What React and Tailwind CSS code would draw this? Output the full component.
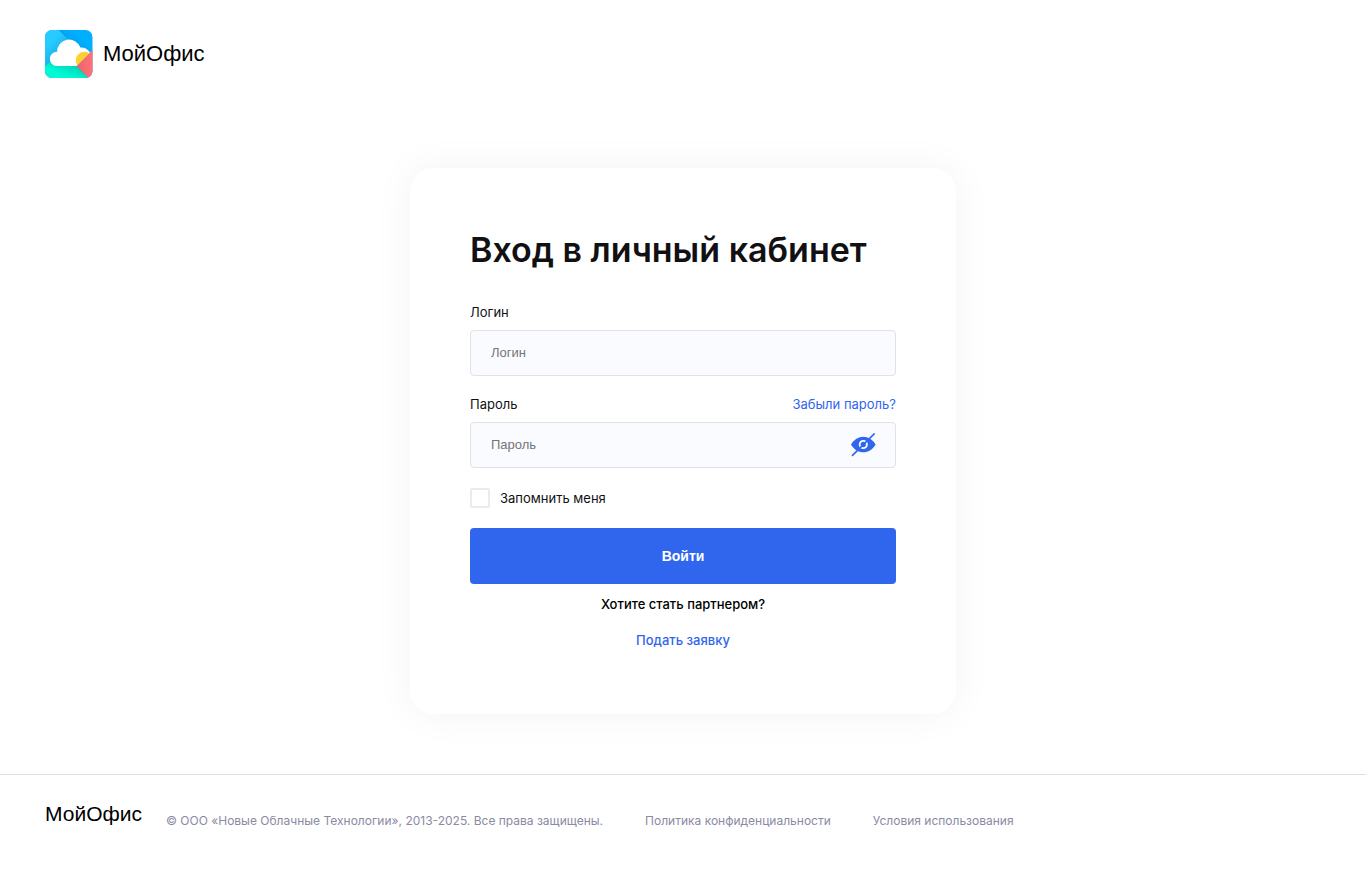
import React, { useState } from 'react';

const LogoIcon = () => (
  <svg className="w-12 h-12" viewBox="0 0 48 48" aria-hidden="true">
    <defs>
      <clipPath id="logoShape">
        <rect width="47.5" height="48" rx="7" />
      </clipPath>
      <clipPath id="cloudShape">
        <path d="M11.600 36A7.100 7.100 0 0 1 12.100 21.800 12 12 0 0 1 35.400 17.500C39.500 17.300 43 19.300 45 22.400L31.500 36z" />
      </clipPath>
      <linearGradient id="logoLeft" x1="0" y1="0" x2="1" y2="1">
        <stop offset="0.25" stopColor="#26ccff" />
        <stop offset="0.8" stopColor="#0f94d4" />
      </linearGradient>
      <linearGradient id="logoTop" x1="1" y1="0" x2="0" y2="1">
        <stop offset="0.2" stopColor="#00b0ff" />
        <stop offset="0.8" stopColor="#007fd0" />
      </linearGradient>
      <linearGradient id="logoBottom" x1="0" y1="1" x2="1" y2="0">
        <stop offset="0.3" stopColor="#00fad6" />
        <stop offset="1" stopColor="#00bfa0" />
      </linearGradient>
      <linearGradient id="logoRight" x1="0" y1="0" x2="1" y2="0">
        <stop offset="0" stopColor="#ef6068" />
        <stop offset="1" stopColor="#ff7478" />
      </linearGradient>
    </defs>
    <g clipPath="url(#logoShape)">
      <rect width="48" height="48" fill="url(#logoTop)" />
      <path d="M0 0h13.5L36 22.5 22 36.5H0z" fill="url(#logoLeft)" />
      <path d="M0 36l5-4 26.5 4L43.5 48H0z" fill="url(#logoBottom)" />
      <path d="M48 19.5 31.5 36 43.500 48H48z" fill="url(#logoRight)" />
      <path
        d="M11.600 36A7.100 7.100 0 0 1 12.100 21.800 12 12 0 0 1 35.400 17.500C39.500 17.300 43 19.300 45 22.400L31.500 36z"
        fill="#fff"
      />
      <circle cx="39.5" cy="30.5" r="8.700" fill="#ffcf2e" clipPath="url(#cloudShape)" />
    </g>
  </svg>
);

const EyeOffIcon = () => (
  <svg className="w-[26px] h-6" viewBox="0 0 26 24" aria-hidden="true">
    <path
      d="M1 11.500C3.800 6.500 8.500 3.700 13.300 3.700S22.800 6.500 25.600 11.500C22.800 16.500 18.100 19.300 13.300 19.300S3.800 16.500 1 11.500z"
      fill="#3066ee"
    />
    <circle cx="13.3" cy="11.5" r="3.600" fill="none" stroke="#fafbff" strokeWidth="1.900" />
    <path d="M2 22.800 24.600.5" stroke="#3066ee" strokeWidth="1.700" />
  </svg>
);

const inputClass =
  "w-full h-[46px] rounded border border-[#e1e1e6] bg-[#fafbff] pl-5 pb-px font-['Liberation_Sans',sans-serif] text-[13px] text-[#111] placeholder:text-[#757575] outline-none focus:border-[#3066ee]";

const footerLinks = [
  { id: 'privacy', title: 'Политика конфиденциальности' },
  { id: 'terms', title: 'Условия использования' },
];

const Header = () => (
  <header className="flex px-[45px] pt-[30px]">
    <a href="#" className="flex items-center gap-2.5">
      <LogoIcon />
      <span className="font-['Liberation_Sans',sans-serif] text-[22px] leading-7 text-black">МойОфис</span>
    </a>
  </header>
);

const LoginForm = () => {
  const [login, setLogin] = useState('');
  const [password, setPassword] = useState('');
  const [showPassword, setShowPassword] = useState(false);
  const [remember, setRemember] = useState(false);

  return (
    <form
      onSubmit={(e) => e.preventDefault()}
      className="w-full max-w-[546px] rounded-3xl bg-white px-[60px] pt-[60px] pb-[62px] shadow-[0_0_40px_rgba(0,0,0,0.05)]"
    >
      <h1 className="text-[34px] leading-11 font-semibold">Вход в личный кабинет</h1>

      <label htmlFor="login" className="block mt-[30px] mb-2 leading-5">
        Логин
      </label>
      <input
        id="login"
        type="text"
        placeholder="Логин"
        value={login}
        onChange={(e) => setLogin(e.target.value)}
        className={inputClass}
      />

      <div className="flex justify-between mt-[18px] mb-2 leading-5">
        <label htmlFor="password">Пароль</label>
        <a href="#" className="text-[#3066ee]">
          Забыли пароль?
        </a>
      </div>
      <div className="relative">
        <input
          id="password"
          type={showPassword ? 'text' : 'password'}
          placeholder="Пароль"
          value={password}
          onChange={(e) => setPassword(e.target.value)}
          className={inputClass}
        />
        <button
          type="button"
          onClick={() => setShowPassword(!showPassword)}
          className="absolute right-5 inset-y-0 flex items-center cursor-pointer"
        >
          <EyeOffIcon />
        </button>
      </div>

      <label className="flex items-center gap-2.5 mt-5 leading-5 cursor-pointer">
        <input
          type="checkbox"
          checked={remember}
          onChange={(e) => setRemember(e.target.checked)}
          className="appearance-none w-5 h-5 rounded-xs border-2 border-[#ebebeb] bg-white checked:bg-[#3066ee] checked:border-[#3066ee]"
        />
        Запомнить меня
      </label>

      <button
        type="submit"
        className="w-full h-14 mt-5 rounded bg-[#3066ee] font-['Liberation_Sans',sans-serif] text-[14px] font-bold text-white cursor-pointer"
      >
        Войти
      </button>

      <div className="flex flex-col items-center gap-3 mt-2 leading-6 font-medium">
        <p className="text-black">Хотите стать партнером?</p>
        <a href="#" className="text-[#3066ee]">
          Подать заявку
        </a>
      </div>
    </form>
  );
};

const Footer = () => (
  <footer className="flex flex-wrap items-start px-[45px] pt-[25px] pb-10 border-t border-[#e0e0e0] text-[12px] text-[#8a8aa3]">
    <a href="#" className="mr-6 font-['Liberation_Sans',sans-serif] text-[21px] leading-7 text-black">
      МойОфис
    </a>
    <div className="flex flex-wrap gap-x-[42px] pt-[11px] leading-5">
      <p>© ООО «Новые Облачные Технологии», 2013-2025. Все права защищены.</p>
      {footerLinks.map((link) => (
        <a key={link.id} href="#">
          {link.title}
        </a>
      ))}
    </div>
  </footer>
);

const App = () => (
  <div className="w-full bg-white font-[Inter,sans-serif] text-[13px] text-[#111114]">
    <Header />
    <main className="flex justify-center mt-[90px] mb-[60px]">
      <LoginForm />
    </main>
    <Footer />
  </div>
);

export default App;
